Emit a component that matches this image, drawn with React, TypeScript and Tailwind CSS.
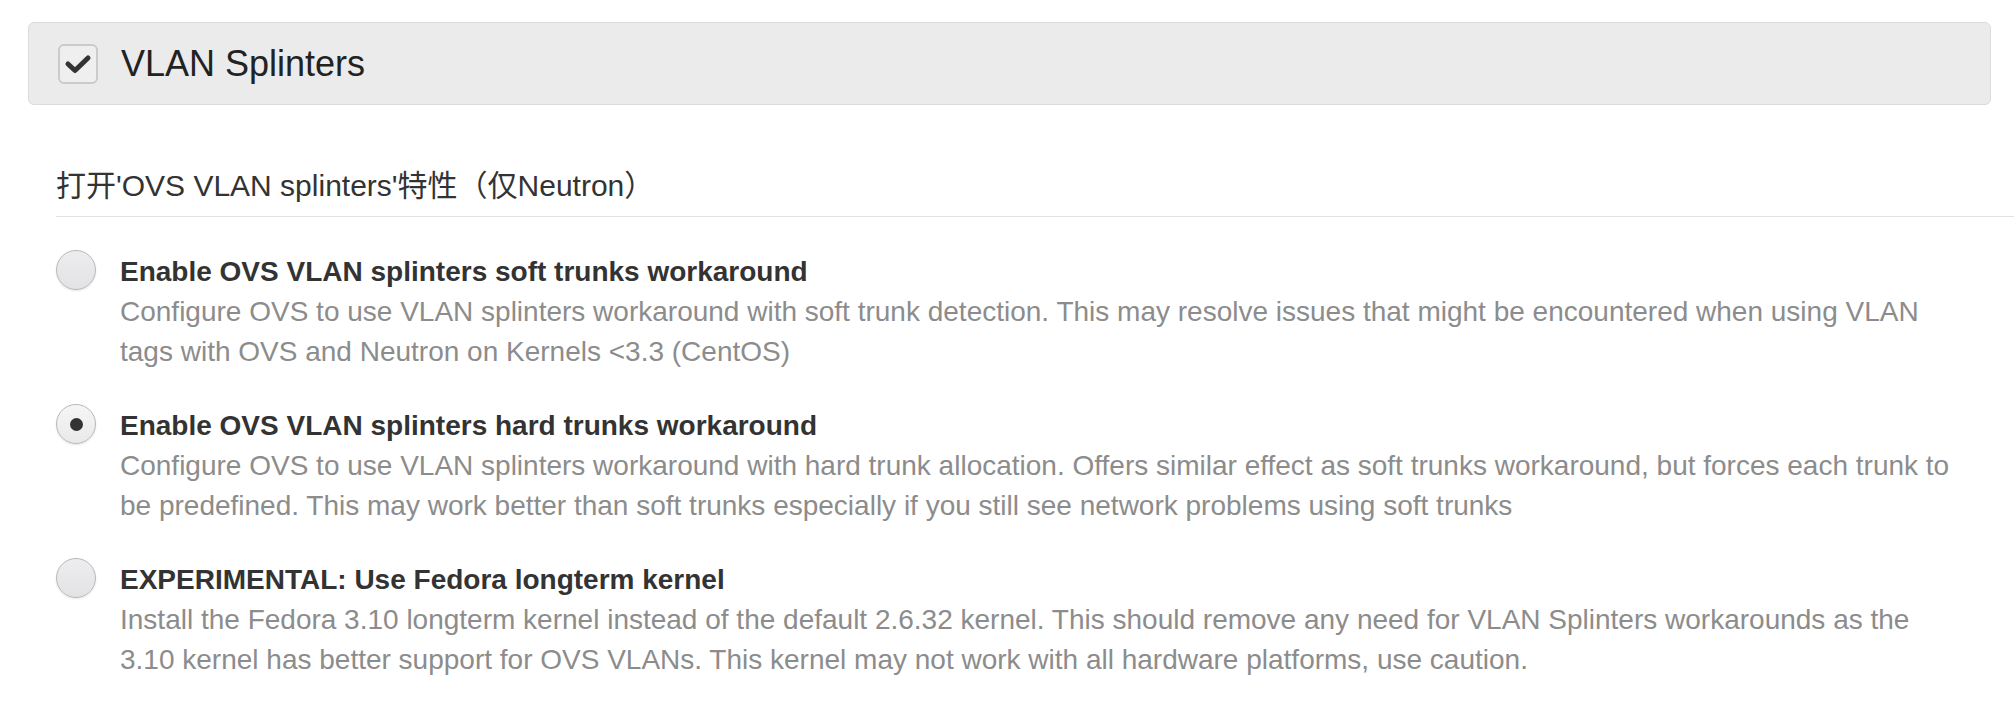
import React from "react";

type Item = { title: string; desc: string; checked?: boolean };

const items: Item[] = [
  {
    title: "Enable OVS VLAN splinters soft trunks workaround",
    desc: "Configure OVS to use VLAN splinters workaround with soft trunk detection. This may resolve issues that might be encountered when using VLAN tags with OVS and Neutron on Kernels <3.3 (CentOS)",
  },
  {
    title: "Enable OVS VLAN splinters hard trunks workaround",
    desc: "Configure OVS to use VLAN splinters workaround with hard trunk allocation. Offers similar effect as soft trunks workaround, but forces each trunk to be predefined. This may work better than soft trunks especially if you still see network problems using soft trunks",
    checked: true,
  },
  {
    title: "EXPERIMENTAL: Use Fedora longterm kernel",
    desc: "Install the Fedora 3.10 longterm kernel instead of the default 2.6.32 kernel. This should remove any need for VLAN Splinters workarounds as the 3.10 kernel has better support for OVS VLANs. This kernel may not work with all hardware platforms, use caution.",
  },
];

function Radio({ checked }: { checked?: boolean }) {
  return (
    <div
      className={
        "w-[40px] h-[40px] shrink-0 rounded-full border border-[#b8b8b8] flex items-center justify-center shadow-[0_1px_2px_rgba(0,0,0,0.1)] mt-[-2px] " +
        (checked
          ? "bg-linear-to-b from-[#f6f6f6] to-[#e9e9e9]"
          : "bg-linear-to-b from-[#ededef] to-[#e3e3e5]")
      }
    >
      {checked && <div className="w-[13px] h-[13px] rounded-full bg-[#333]" />}
    </div>
  );
}

export default function App() {
  return (
    <div className="w-[2014px] h-[710px] overflow-hidden bg-white font-['Liberation_Sans','Noto_Sans_CJK_SC',sans-serif]">
      <div className="pt-[22px] pl-[28px] pr-[23px]">
        <div className="h-[83px] rounded-[6px] border border-[#dcdcdc] bg-[#ebebeb] flex items-center pl-[29px]">
          <div className="w-[40px] h-[40px] rounded-[6px] border-2 border-[#cbcbcb] bg-[#efefef] flex items-center justify-center">
            <svg width="30" height="24" viewBox="0 0 30 24">
              <path
                d="M5 12 L12 18.5 L25 6"
                fill="none"
                stroke="#333"
                strokeWidth="5"
                strokeLinecap="round"
                strokeLinejoin="round"
              />
            </svg>
          </div>
          <div className="ml-[23px] text-[36px] leading-[40px] text-[#222]">VLAN Splinters</div>
        </div>
      </div>
      <div className="mt-[61px] pl-[56px]">
        <div className="text-[30px] leading-[40px] text-[#333] pb-[10px] border-b border-[#e2e2e2]">
          打开'OVS VLAN splinters'特性（仅Neutron）
        </div>
        <div className="pt-[35px] flex flex-col gap-[34px]">
          {items.map((it) => (
            <div key={it.title} className="flex items-start">
              <Radio checked={it.checked} />
              <div className="ml-[24px] w-[1842px]">
                <div className="text-[28px] leading-[40px] font-bold text-[#333]">{it.title}</div>
                <div className="text-[28px] leading-[40px] text-[#8c8c8c]">{it.desc}</div>
              </div>
            </div>
          ))}
        </div>
      </div>
    </div>
  );
}
